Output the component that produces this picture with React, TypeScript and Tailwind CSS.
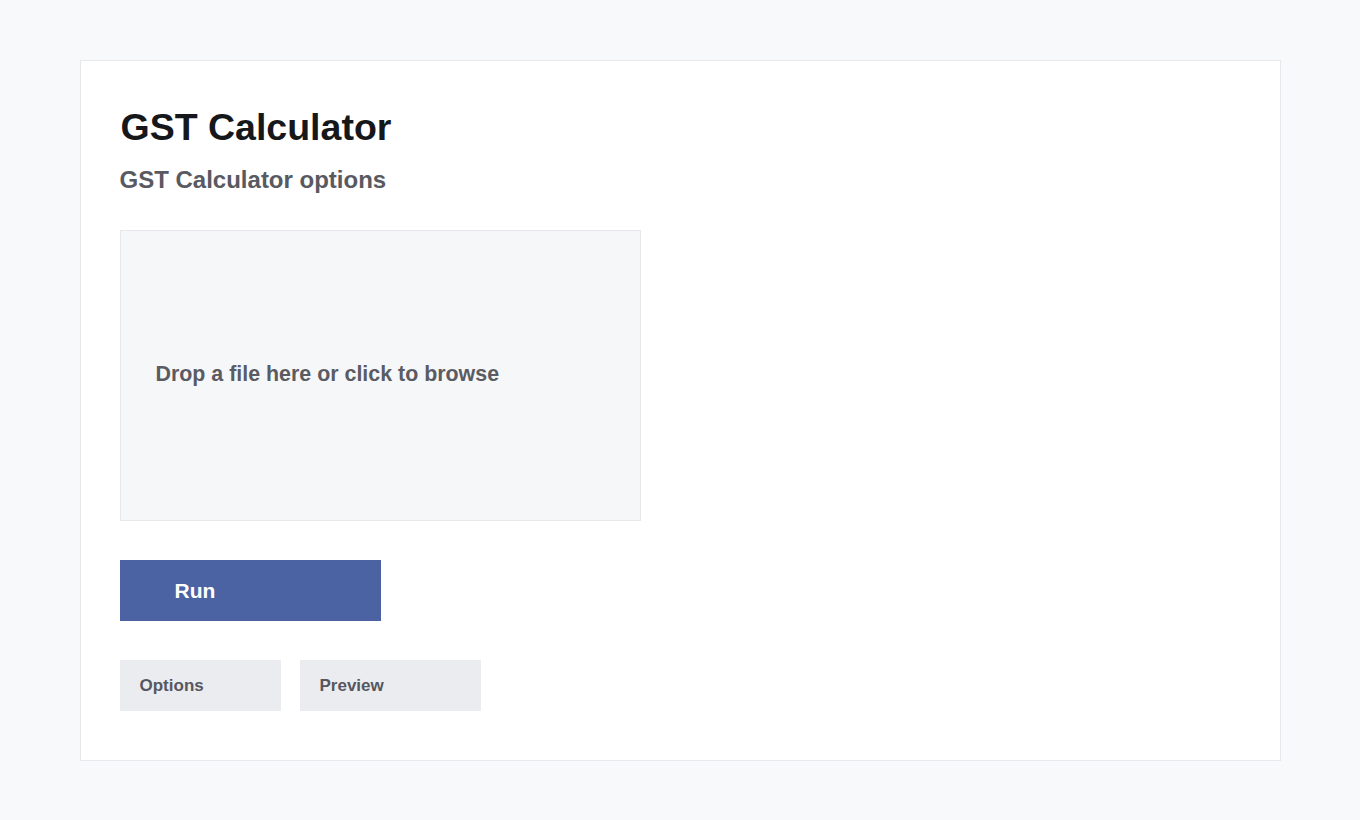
export default function App() {
  const tabs = [
    { label: 'Options', width: 'w-[161px]' },
    { label: 'Preview', width: 'w-[181px]' },
  ];

  return (
    <div
      className="min-h-[820px] bg-[#f8f9fa] pt-[60px]"
      style={{ fontFamily: '"Liberation Sans", Arial, sans-serif' }}
    >
      <div className="mx-auto flex h-[701px] w-[1201px] flex-col border border-[#e6e8eb] bg-white px-[39px] pt-[41px]">
        <h1 className="pl-px text-[37.5px] font-bold leading-[50px] text-[#16171a]">GST Calculator</h1>
        <h2 className="mt-[12px] text-[24px] font-bold leading-[32px] text-[#585961]">
          GST Calculator options
        </h2>

        {/* Drop zone */}
        <div className="mt-[34px] flex h-[291px] w-[521px] items-center border border-[#e6e8eb] bg-[#f6f7f8] pb-[2px] pl-[35px]">
          <span className="text-[21.4px] font-bold text-[#5a5b63]">Drop a file here or click to browse</span>
        </div>

        <button className="mt-[39px] flex h-[61px] w-[261px] items-center bg-[#4b63a3] pl-[55px] text-[21px] font-bold text-white">
          Run
        </button>

        <div className="mt-[39px] flex gap-[19px]">
          {tabs.map((tab) => (
            <button
              key={tab.label}
              className={`flex h-[51px] items-center bg-[#ebecf0] pl-[20px] pt-px text-[17px] font-bold text-[#56575f] ${tab.width}`}
            >
              {tab.label}
            </button>
          ))}
        </div>
      </div>
    </div>
  );
}
